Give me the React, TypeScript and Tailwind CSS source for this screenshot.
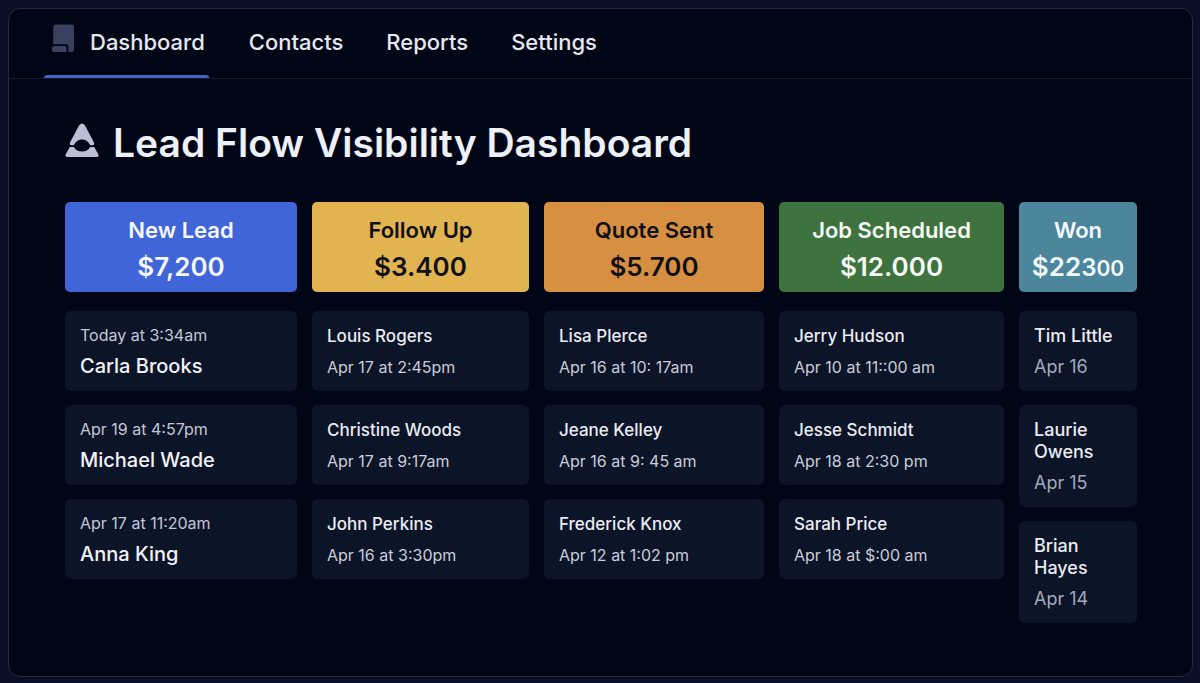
type Lead = { name: string; time: string };

type Stage = {
  title: string;
  tone: string;
  leads: Lead[];
  amount: string;
  tail?: [string, string];
  layout: "time-first" | "name-first" | "compact";
};

const stages: Stage[] = [
  {
    title: "New Lead",
    amount: "$7,200",
    tone: "bg-[#4065d8] text-[#f4f7ff]",
    layout: "time-first",
    leads: [
      { name: "Carla Brooks", time: "Today at 3:34am" },
      { name: "Michael Wade", time: "Apr 19 at 4:57pm" },
      { name: "Anna King", time: "Apr 17 at 11:20am" },
    ],
  },
  {
    title: "Follow Up",
    amount: "$3.400",
    tone: "bg-[#e1b450] text-[#10101a]",
    layout: "name-first",
    leads: [
      { name: "Louis Rogers", time: "Apr 17 at 2:45pm" },
      { name: "Christine Woods", time: "Apr 17 at 9:17am" },
      { name: "John Perkins", time: "Apr 16 at 3:30pm" },
    ],
  },
  {
    title: "Quote Sent",
    amount: "$5.700",
    tone: "bg-[#d79041] text-[#10101a]",
    layout: "name-first",
    leads: [
      { name: "Lisa Plerce", time: "Apr 16 at 10: 17am" },
      { name: "Jeane Kelley", time: "Apr 16 at 9: 45 am" },
      { name: "Frederick Knox", time: "Apr 12 at 1:02 pm" },
    ],
  },
  {
    title: "Job Scheduled",
    amount: "$12.000",
    tone: "bg-[#3e733f] text-[#f6fbf6]",
    layout: "name-first",
    leads: [
      { name: "Jerry Hudson", time: "Apr 10 at 11::00 am" },
      { name: "Jesse Schmidt", time: "Apr 18 at 2:30 pm" },
      { name: "Sarah Price", time: "Apr 18 at $:00 am" },
    ],
  },
  {
    title: "Won",
    amount: "$22",
    tail: ["3", "00"],
    tone: "bg-[#4b869c] text-[#f2f9fb]",
    layout: "compact",
    leads: [
      { name: "Tim Little", time: "Apr 16" },
      { name: "Laurie Owens", time: "Apr 15" },
      { name: "Brian Hayes", time: "Apr 14" },
    ],
  },
];

function BoardIcon() {
  return (
    <svg width="24" height="30" viewBox="0 0 24 30" fill="#39415f" aria-hidden="true">
      <path d="M4 .5H19.500Q22 .5 22 3V25.500Q22 28 19.500 28H16.500V22.500Q16.500 20.200 14.200 20.200H1.200V3.300Q1.200 .5 4 .5Z" />
      <path d="M2.500 22H12.500Q14.500 22 14.500 24V28H2Q0 28 0 26V24.500Q0 22 2.500 22Z" />
    </svg>
  );
}

function PeakIcon() {
  return (
    <svg width="34" height="36" viewBox="0 0 34 36" fill="#b9c0d6" aria-hidden="true">
      <path d="M14 2.400Q17 -1.400 20 2.400L29 19.500Q29.800 22.200 27.400 22.200H25.200Q22.500 16.500 17 16.500T8.800 22.200H6.600Q4.200 22.200 5 19.500Z" />
      <path d="M4.800 24H8.800Q11.500 28.600 17 28.600T25.200 24H29.200L33.400 31.500Q34 34 31.900 34H2.100Q0 34 .6 31.500Z" />
    </svg>
  );
}

function LeadCard({ lead, layout }: { lead: Lead; layout: Stage["layout"] }) {
  if (layout === "time-first") {
    return (
      <li className="flex flex-col gap-2 rounded-md bg-[#0c1428] px-[15px] pt-3.5 pb-3">
        <p className="text-[16px] leading-5 text-[#c3c8d6]">{lead.time}</p>
        <h3 className="text-[20px] leading-[26px] font-medium text-[#f0f2f7]">{lead.name}</h3>
      </li>
    );
  }
  const compact = layout === "compact";
  return (
    <li className="flex flex-col gap-2.5 rounded-md bg-[#0c1428] px-[15px] py-3.5">
      <h3 className={`leading-[22px] font-medium text-[#e9ebf1] ${compact ? "text-[18px]" : "text-[17px]"}`}>
        {lead.name}
      </h3>
      <p className={`leading-5 ${compact ? "text-[18px] text-[#a4aabd]" : "text-[16px] text-[#c9cdd9]"}`}>
        {lead.time}
      </p>
    </li>
  );
}

function StageColumn({ stage }: { stage: Stage }) {
  return (
    <section className="min-w-0">
      <header className={`rounded-[5px] pt-2.5 pb-1.5 text-center ${stage.tone}`}>
        <h2 className="text-[22px] leading-9 font-semibold">{stage.title}</h2>
        <p className="text-[26px] leading-[38px] font-semibold">
          {stage.amount}
          {stage.tail && (
            <>
              <span className="text-[24px] leading-none">{stage.tail[0]}</span>
              <span className="text-[21px] leading-none">{stage.tail[1]}</span>
            </>
          )}
        </p>
      </header>
      <ul className="mt-[19px] flex flex-col gap-3.5">
        {stage.leads.map((lead) => (
          <LeadCard key={lead.name} lead={lead} layout={stage.layout} />
        ))}
      </ul>
    </section>
  );
}

export default function App() {
  return (
    <div className="flex min-h-screen flex-col bg-[#0a0f28] pt-2 pr-[7px] pb-1.5 pl-2 font-['Inter',sans-serif]">
      <div className="flex-1 rounded-xl border border-[#262b3c] bg-[#010617]">
        <nav className="flex h-[70px] items-stretch border-b border-[#141a2b] pl-[35px] text-[22px] font-medium text-[#e6e8ef]">
          <a href="#dashboard" aria-current="page" className="mr-10 flex flex-col justify-between pt-3">
            <span className="flex items-start gap-3.5 pr-1 pl-2">
              <span className="pt-[3px]">
                <BoardIcon />
              </span>
              <span className="pt-[3px] leading-9">Dashboard</span>
            </span>
            <span className="h-[3px] rounded-t-full bg-[#4363c8]" />
          </a>
          <div className="flex gap-[43px] pt-[15px] leading-9">
            <a href="#contacts">Contacts</a>
            <a href="#reports">Reports</a>
            <a href="#settings">Settings</a>
          </div>
        </nav>
        <main className="pt-9 pr-[55px] pb-12 pl-14">
          <h1 className="flex items-center gap-3.5 text-[39px] leading-14 font-semibold text-[#eef0f8]">
            <span className="pb-1">
              <PeakIcon />
            </span>
            Lead Flow Visibility Dashboard
          </h1>
          <div className="mt-[31px] grid grid-cols-[232fr_217fr_220fr_225fr_118fr] items-start gap-[15px]">
            {stages.map((stage) => (
              <StageColumn key={stage.title} stage={stage} />
            ))}
          </div>
        </main>
      </div>
    </div>
  );
}
